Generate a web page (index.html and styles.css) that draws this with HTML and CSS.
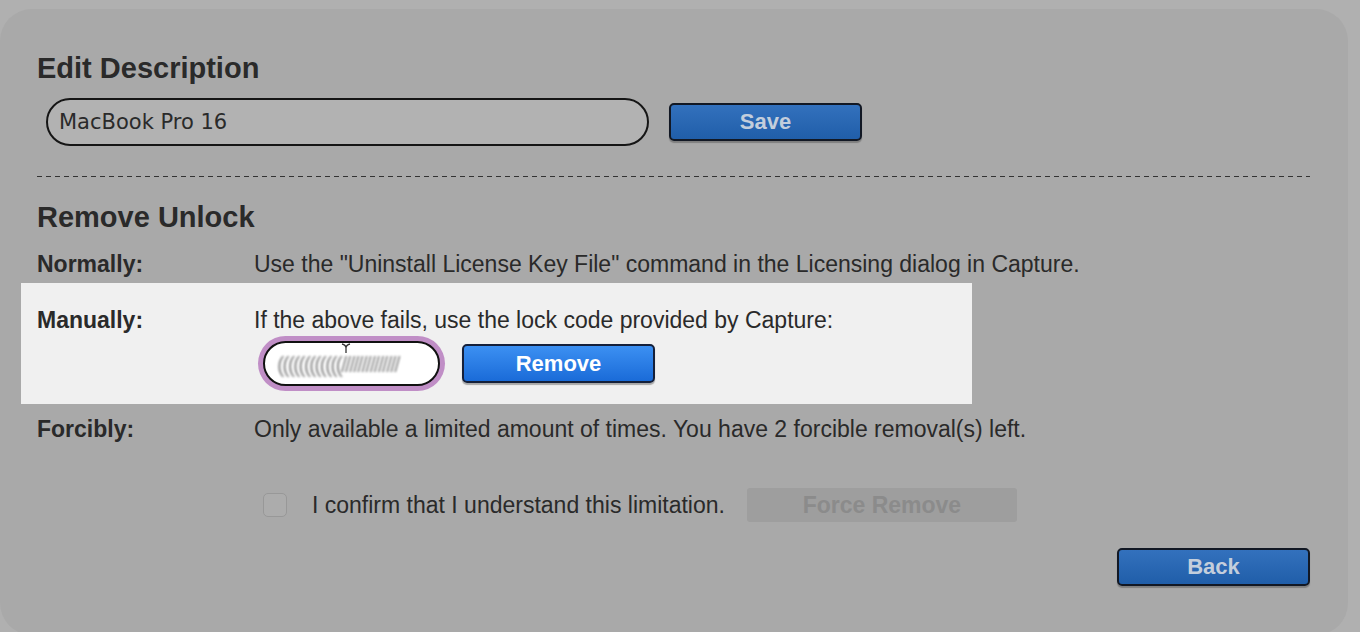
FILE: index.html
```html
<!DOCTYPE html>
<html>
<head>
<meta charset="utf-8">
<title>Edit Description</title>
<link rel="stylesheet" href="styles.css">
</head>
<body>
<div class="card">
  <h2 class="title">Edit Description</h2>
  <div class="desc-row">
    <div class="desc-input">MacBook Pro 16</div>
    <button class="btn btn-dim">Save</button>
  </div>
  <div class="dashed"></div>
  <h2 class="title title-2">Remove Unlock</h2>

  <div class="row row-normal">
    <div class="label">Normally:</div>
    <div class="text">Use the "Uninstall License Key File" command in the Licensing dialog in Capture.</div>
  </div>

  <div class="spot">
    <div class="row">
      <div class="label">Manually:</div>
      <div class="text">If the above fails, use the lock code provided by Capture:</div>
    </div>
    <div class="lock-row">
      <div class="lock-input">
        <span class="lock-code">((((((((((((//////////////</span>
        <svg class="ibeam" width="10" height="10" viewBox="0 0 10 10"><path d="M1 1 Q5 2 5 5 Q5 2 9 1 M5 5 V10" fill="none" stroke="#333" stroke-width="1.3"/></svg>
      </div>
      <button class="btn btn-live">Remove</button>
    </div>
  </div>

  <div class="row row-force">
    <div class="label">Forcibly:</div>
    <div class="text">Only available a limited amount of times. You have 2 forcible removal(s) left.</div>
  </div>

  <div class="confirm-row">
    <span class="checkbox"></span>
    <span class="confirm-text">I confirm that I understand this limitation.</span>
    <button class="btn-disabled">Force Remove</button>
  </div>

  <div class="back-row">
    <button class="btn btn-dim">Back</button>
  </div>
</div>
</body>
</html>
```

FILE: styles.css
```css
html, body {
  margin: 0;
  padding: 0;
  background: #b0b0b0;
  height: 632px;
  overflow: hidden;
}

body {
  font-family: "Liberation Sans", Arial, sans-serif;
  color: #262626;
}

.card {
  box-sizing: border-box;
  width: 1348px;
  height: 626px;
  margin-top: 9px;
  background: #a9a9a9;
  border-radius: 32px;
  padding: 43px 38px 0 37px;
}

.title {
  margin: 0;
  font-size: 29px;
  line-height: 32px;
  font-weight: 700;
  color: #2a2a2a;
}

.title-2 {
  margin-top: 24px;
}

.desc-row {
  display: flex;
  align-items: center;
  gap: 20px;
  margin-top: 14px;
  padding-left: 9px;
}

.desc-input {
  box-sizing: border-box;
  width: 603px;
  height: 48px;
  border: 2px solid #151515;
  border-radius: 24px;
  background: #b2b2b2;
  padding-left: 11px;
  font-family: "DejaVu Sans", sans-serif;
  font-size: 21px;
  line-height: 44px;
  color: #2a2a2a;
}

.btn {
  box-sizing: border-box;
  width: 193px;
  height: 38px;
  border-radius: 5px;
  font-family: "Liberation Sans", Arial, sans-serif;
  font-weight: 700;
  font-size: 22px;
  padding: 0;
  cursor: pointer;
}

.btn-dim {
  background: linear-gradient(#3371bd, #205ea9);
  border: 2px solid #121824;
  color: #c3cedc;
  box-shadow: 0 2px 1px rgba(0, 0, 0, 0.25);
}

.btn-live {
  height: 39px;
  background: linear-gradient(#3c90f2, #1a6bd8);
  border: 2px solid #15203a;
  color: #ffffff;
  box-shadow: 0 2px 1px rgba(0, 0, 0, 0.3);
}

.dashed {
  margin-top: 30px;
  height: 1px;
  background: repeating-linear-gradient(90deg, #333 0 5px, transparent 5px 9px);
}

.row {
  display: flex;
  font-size: 23px;
  line-height: 24px;
}

.row-normal {
  margin-top: 19px;
}

.label {
  width: 217px;
  flex: none;
  font-weight: 700;
  color: #2a2a2a;
}

.text {
  color: #2a2a2a;
}

.spot {
  margin-top: 7px;
  margin-left: -16px;
  width: 951px;
  box-sizing: border-box;
  background: #f0f0f0;
  padding: 25px 16px 13px;
}

.lock-row {
  display: flex;
  align-items: center;
  gap: 22px;
  margin-top: 4px;
  padding-left: 226px;
}

.lock-input {
  position: relative;
  box-sizing: border-box;
  width: 177px;
  height: 45px;
  margin: 5px 0;
  border: 2px solid #111;
  border-radius: 23px;
  background: #fff;
  box-shadow: 0 0 0 5px #c08ec6;
  padding-left: 12px;
  overflow: hidden;
}

.lock-code {
  display: block;
  font-family: "Liberation Sans", Arial, sans-serif;
  font-size: 22px;
  line-height: 43px;
  letter-spacing: -2px;
  color: #8a8a8a;
  filter: blur(1.1px);
  white-space: nowrap;
}

.ibeam {
  position: absolute;
  left: 76px;
  top: 0;
}

.row-force {
  margin-top: 13px;
}

.confirm-row {
  display: flex;
  align-items: center;
  margin-top: 47px;
  padding-left: 226px;
  height: 34px;
}

.checkbox {
  box-sizing: border-box;
  width: 24px;
  height: 24px;
  border: 1px solid #989898;
  border-radius: 5px;
  background: #acacac;
  flex: none;
}

.confirm-text {
  margin-left: 25px;
  font-size: 23px;
  color: #2a2a2a;
}

.btn-disabled {
  margin-left: 22px;
  width: 270px;
  height: 34px;
  border: none;
  border-radius: 3px;
  background: #9e9e9e;
  color: #8b8b8b;
  font-family: "Liberation Sans", Arial, sans-serif;
  font-weight: 700;
  font-size: 23px;
  padding: 0;
}

.back-row {
  display: flex;
  justify-content: flex-end;
  margin-top: 26px;
}
```
